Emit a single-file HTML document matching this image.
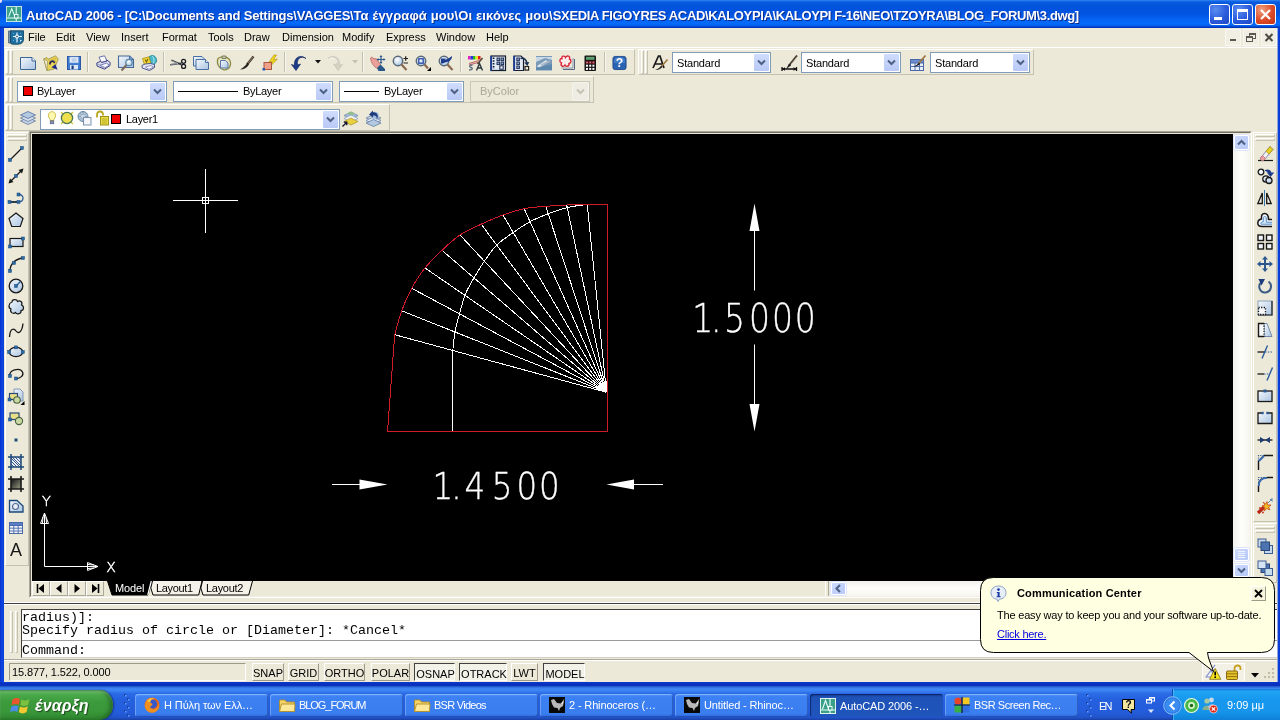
<!DOCTYPE html>
<html lang="el"><head><meta charset="utf-8"><title>AutoCAD 2006</title>
<style>
html,body{margin:0;padding:0;}
body{width:1280px;height:720px;overflow:hidden;background:#ECE9D8;font-family:"Liberation Sans",sans-serif;font-size:11px;position:relative;}
#scr{will-change:transform;position:absolute;left:0;top:0;width:1280px;height:720px;overflow:hidden;background:#ECE9D8;}
#scr div,#scr span.t,#scr svg.i{position:absolute;box-sizing:border-box;}
span.t{white-space:nowrap;display:block;}
svg.i{overflow:visible;}
.tb{background:#ECE9D8;border-top:1px solid #fff;border-left:1px solid #fff;border-bottom:1px solid #C5C2B2;border-right:1px solid #C5C2B2;}
.gv{width:3px;border-left:1px solid #fff;border-top:1px solid #fff;border-right:1px solid #C4C1B0;border-bottom:1px solid #C4C1B0;}
.gh{height:3px;border-left:1px solid #fff;border-top:1px solid #fff;border-right:1px solid #C4C1B0;border-bottom:1px solid #C4C1B0;}
.sep{width:2px;border-left:1px solid #C2BFAE;border-right:1px solid #F8F7F0;}
.cb{background:#fff;border:1px solid #7F9DB9;}
.cbb{background:linear-gradient(#D0DCFC,#B8C9F6);border:1px solid #fff;border-radius:2px;}
.cbd{background:#ECE9D8;border:1px solid #C9C7BA;}
.sbtn{border-top:1px solid #fff;border-left:1px solid #fff;border-bottom:1px solid #9D9A8C;border-right:1px solid #9D9A8C;background:#ECE9D8;}
.sbtnp{border-top:1px solid #404040;border-left:1px solid #404040;border-bottom:1px solid #fff;border-right:1px solid #fff;background:#F3F2E9;}
.tk{border-radius:3px;background:linear-gradient(#5A9CFA 0,#3C81F3 12%,#3A7DEF 85%,#2E6ADF 100%);box-shadow:inset 1px 1px 0 rgba(255,255,255,.25), inset -1px -1px 0 rgba(0,0,40,.25);}
.tka{border-radius:3px;background:linear-gradient(#163F9A 0,#1E52B7 15%,#1F55BC 100%);box-shadow:inset 1px 1px 1px rgba(0,0,40,.5);}
</style></head><body><div id="scr">
<div style="left:0px;top:0px;width:1280px;height:28px;background:linear-gradient(#3A8CF4 0,#1467E6 4%,#0658DE 10%,#0153DD 28%,#0254E0 48%,#045BE8 60%,#0566F5 72%,#066AFA 84%,#0563F0 91%,#0040CC 96%,#0030B0 100%);"></div>
<div style="left:0px;top:0px;width:2px;height:3px;background:#E6DEFC;border-bottom-right-radius:2px;"></div>
<div style="left:0px;top:28px;width:4px;height:658px;background:linear-gradient(90deg,#0A2FD0,#0C48E0 50%,#0A3FD8);"></div>
<div style="left:1277px;top:28px;width:3px;height:658px;background:linear-gradient(90deg,#92A7DA 0,#92A7DA 33%,#0C44DE 34%,#0A35D0 100%);"></div>
<div style="left:0px;top:682px;width:1280px;height:4px;background:linear-gradient(#0A3ACC,#0830C0 50%,#0A34BC);"></div>
<svg class="i" style="left:6px;top:6px;" width="16" height="16" viewBox="0 0 18 18"><rect x="0.5" y="0.5" width="17" height="17" fill="#3AA089" stroke="#D8F0E8"/><path d="M3 12 L6.5 3 L10 12 M11.5 1 V17 M1 13.5 H17" fill="none" stroke="#E8FFF8" stroke-width="1.2"/><rect x="9.5" y="9.5" width="4" height="4" fill="#3AA089" stroke="#fff"/></svg>
<span class="t" style="left:26px;top:8px;font-size:13px;line-height:15px;color:#fff;font-weight:bold;letter-spacing:-0.21px;text-shadow:1px 1px 0 #0A2A8C;">AutoCAD 2006 - [C:\Documents and Settings\VAGGES\<span style="letter-spacing:0.12px">Τα έγγραφά μου\Οι εικόνες μου\</span><span style="letter-spacing:-0.36px">SXEDIA FIGOYRES ACAD\KALOYPIA\KALOYPI F-16\NEO\TZOYRA\BLOG_FORUM\3.dwg]</span></span>
<div style="left:1209px;top:4px;width:21px;height:21px;border:1px solid #fff;border-radius:3px;background:radial-gradient(circle at 30% 25%,#5C8CF0,#2A5BDC 55%,#1F48C4);"></div>
<svg class="i" style="left:1209px;top:4px;" width="21" height="21" viewBox="0 0 21 21"><rect x="5" y="13" width="8" height="3" fill="#fff"/></svg>
<div style="left:1232px;top:4px;width:21px;height:21px;border:1px solid #fff;border-radius:3px;background:radial-gradient(circle at 30% 25%,#5C8CF0,#2A5BDC 55%,#1F48C4);"></div>
<svg class="i" style="left:1232px;top:4px;" width="21" height="21" viewBox="0 0 21 21"><rect x="5.5" y="5.5" width="10" height="10" fill="none" stroke="#fff" stroke-width="1"/><rect x="5" y="5" width="11" height="3" fill="#fff"/></svg>
<div style="left:1255px;top:4px;width:21px;height:21px;border:1px solid #fff;border-radius:3px;background:radial-gradient(circle at 30% 25%,#F0A080,#DC4A26 55%,#C2331A);"></div>
<svg class="i" style="left:1255px;top:4px;" width="21" height="21" viewBox="0 0 21 21"><path d="M6 6 L15 15 M15 6 L6 15" stroke="#fff" stroke-width="2.2" fill="none"/></svg>
<div style="left:4px;top:28px;width:1273px;height:20px;background:#EDEADA;border-bottom:1px solid #fff;"></div>
<svg class="i" style="left:8px;top:30px;" width="17" height="15" viewBox="0 0 17 15"><path d="M0.5 1 H4 V13 H0.5 Z" fill="#7890A8" stroke="#3C5870" stroke-width=".7"/><path d="M2.5 0.8 H15.5 V9 Q15.5 14 10 14.2 H4.5 Q2.5 14.2 2.5 12 Z" fill="#1E6FA0" stroke="#134868" stroke-width=".9"/><path d="M9 2.5 V12.5 M5 6.5 H14" stroke="#DFF4FF" stroke-width="1.2"/><circle cx="9" cy="6.5" r="1.9" fill="#EAF8FF"/><circle cx="9" cy="6.5" r=".8" fill="#10304C"/><path d="M12 10 L14 10 L12 12 Z" fill="#DFF4FF"/><g fill="#5CB0D8"><rect x="5" y="3" width="1" height="1"/><rect x="12" y="3" width="1" height="1"/><rect x="5" y="10" width="1" height="1"/><rect x="6.5" y="8.5" width="1" height="1"/><rect x="11.5" y="8.3" width="1" height="1"/></g></svg>
<span class="t" style="left:28px;top:31px;font-size:11px;line-height:12px;color:#000;">File</span>
<span class="t" style="left:56px;top:31px;font-size:11px;line-height:12px;color:#000;">Edit</span>
<span class="t" style="left:86px;top:31px;font-size:11px;line-height:12px;color:#000;">View</span>
<span class="t" style="left:121px;top:31px;font-size:11px;line-height:12px;color:#000;">Insert</span>
<span class="t" style="left:162px;top:31px;font-size:11px;line-height:12px;color:#000;">Format</span>
<span class="t" style="left:208px;top:31px;font-size:11px;line-height:12px;color:#000;">Tools</span>
<span class="t" style="left:244px;top:31px;font-size:11px;line-height:12px;color:#000;">Draw</span>
<span class="t" style="left:282px;top:31px;font-size:11px;line-height:12px;color:#000;">Dimension</span>
<span class="t" style="left:342px;top:31px;font-size:11px;line-height:12px;color:#000;">Modify</span>
<span class="t" style="left:386px;top:31px;font-size:11px;line-height:12px;color:#000;">Express</span>
<span class="t" style="left:436px;top:31px;font-size:11px;line-height:12px;color:#000;">Window</span>
<span class="t" style="left:486px;top:31px;font-size:11px;line-height:12px;color:#000;">Help</span>
<div style="left:1225px;top:29px;width:16px;height:17px;background:#F1EFE4;border:1px solid #F8F7F0;"></div>
<svg class="i" style="left:1225px;top:29px;" width="16" height="17" viewBox="0 0 16 17"><rect x="5" y="10" width="6" height="2" fill="#5A5A52"/></svg>
<div style="left:1243px;top:29px;width:16px;height:17px;background:#F1EFE4;border:1px solid #F8F7F0;"></div>
<svg class="i" style="left:1243px;top:29px;" width="16" height="17" viewBox="0 0 16 17"><rect x="6.5" y="4.5" width="6" height="5" fill="none" stroke="#5A5A52"/><rect x="6" y="4" width="7" height="2" fill="#5A5A52"/><rect x="3.5" y="7.5" width="6" height="5" fill="#F1EFE4" stroke="#5A5A52"/><rect x="3" y="7" width="7" height="2" fill="#5A5A52"/></svg>
<div style="left:1261px;top:29px;width:16px;height:17px;background:#F1EFE4;border:1px solid #F8F7F0;"></div>
<svg class="i" style="left:1261px;top:29px;" width="16" height="17" viewBox="0 0 16 17"><path d="M4.5 5 L11.5 12 M11.5 5 L4.5 12" stroke="#4A4A42" stroke-width="2" fill="none"/></svg>
<svg class="i" width="0" height="0" style="left:0;top:0"><defs><linearGradient id="pg" x1="0" y1="0" x2="1" y2="1"><stop offset="0" stop-color="#F4F8FC"/><stop offset="1" stop-color="#A9C4E2"/></linearGradient><radialGradient id="lens" cx=".4" cy=".35" r=".7"><stop offset="0" stop-color="#fff"/><stop offset="1" stop-color="#A8C8E4"/></radialGradient></defs></svg>
<div class="tb" style="left:5px;top:49px;width:630px;height:26px;"></div>
<div class="gv" style="left:6px;top:50px;width:3px;height:24px;"></div>
<div class="gv" style="left:10px;top:50px;width:3px;height:24px;"></div>
<svg class="i" style="left:20px;top:55px;" width="16" height="16" viewBox="0 0 16 16"><path d="M0.5 2.5 H12 L15.5 6 V14.5 H0.5 Z" fill="url(#pg)" stroke="#3C6494"/><path d="M12 2.5 V6 H15.5" fill="#F4F8FC" stroke="#3C6494"/></svg>
<svg class="i" style="left:43px;top:55px;" width="16" height="16" viewBox="0 0 16 16"><path d="M0.8 3.8 L4 2.6 L5.2 4.2 L12.5 0.8 L15.3 4 L11.2 14 L4 15.6 Z" fill="#E9D352" stroke="#A09858" stroke-width=".9"/><path d="M0.8 3.8 L4.5 6 L4 15.6 Z" fill="#F4EFD8" stroke="#A09858" stroke-width=".8"/><path d="M4.5 6 L12.5 3 L11.2 14" fill="none" stroke="#C8B440" stroke-width=".7"/><path d="M7 9.5 C6.5 6 10.5 5 11.5 8" fill="none" stroke="#2A2660" stroke-width="1.7"/><path d="M8.5 12.2 L14.5 14.8 L12.5 9.2 Z" fill="#1C2890"/></svg>
<svg class="i" style="left:66px;top:55px;" width="16" height="16" viewBox="0 0 16 16"><rect x="1.5" y="1.5" width="13" height="13" fill="#3F7AD2" stroke="#2C58A8"/><rect x="3.8" y="2" width="8.4" height="5.8" fill="#EAF0FA" stroke="#A8C0E4" stroke-width=".6"/><path d="M5.5 4 H10.5 M5.5 5.8 H10.5" stroke="#88A8D8" stroke-width=".8"/><rect x="4" y="10" width="8" height="4.5" fill="#DCE8F8"/><rect x="5.5" y="10.5" width="2.2" height="3.6" fill="#1C3C80"/></svg>
<div class="sep" style="left:87px;top:52px;width:2px;height:20px;"></div>
<svg class="i" style="left:96px;top:55px;" width="16" height="16" viewBox="0 0 16 16"><path d="M3 2.2 L8.5 0.8 L11 6 L5.5 7.5 Z" fill="#FAFAFE" stroke="#5A64A0" stroke-width=".9"/><path d="M0.8 8 L4.5 6.3 L5.5 7.5 L11 6 L10.5 4.8 L14.2 7.5 L14 10.5 L8.5 14.2 L1 11 Z" fill="#DCDCF0" stroke="#3C4684" stroke-width="1"/><path d="M4 10.2 L10.5 8.2 L13.5 10.2 L8 13.2 Z" fill="#FCFCFF" stroke="#5A64A0" stroke-width=".8"/><path d="M1 9 L8.5 12" stroke="#8088B8" stroke-width=".7"/></svg>
<svg class="i" style="left:118px;top:55px;" width="16" height="16" viewBox="0 0 16 16"><path d="M0.5 1 H11.5 L15.5 4.5 V12.5 H0.5 Z" fill="url(#pg)" stroke="#46689A" stroke-width="1.1"/><path d="M11.5 1 V4.5 H15.5" fill="#7C98D0" stroke="#46689A"/><circle cx="11" cy="7.5" r="3.2" fill="url(#lens)" stroke="#5A88A8" stroke-width="1.3"/><path d="M8.5 10 L3.5 15.5" stroke="#7A6A5C" stroke-width="2"/></svg>
<svg class="i" style="left:141px;top:55px;" width="16" height="16" viewBox="0 0 16 16"><path d="M8 2 C11 -1 16 1 15.5 6 C15 9 12 10 10 9 Z" fill="#48B8C8" stroke="#208098" stroke-width=".8"/><path d="M11 1 C13.5 3 13.5 7 11.5 9" fill="none" stroke="#B8ECF0" stroke-width=".9"/><path d="M1.5 3.5 L8 1.8 L9.8 8.5 L3.5 10 Z" fill="#F2D838" stroke="#A89018" stroke-width=".8"/><path d="M4 4.5 L5.5 7 L7 3.8" fill="none" stroke="#7A6408" stroke-width="1.1"/><path d="M1 10.5 L4 9 L9.5 8.5 L13.5 9.5 L13.5 12.5 L8.5 15.5 L1.2 13 Z" fill="#E8E8F8" stroke="#3C4684" stroke-width=".9"/><path d="M4.5 12 L10 10.5 L12.5 12 L8 14.3 Z" fill="#fff" stroke="#6870A8" stroke-width=".7"/></svg>
<div class="sep" style="left:163px;top:52px;width:2px;height:20px;"></div>
<svg class="i" style="left:170px;top:55px;" width="16" height="16" viewBox="0 0 16 16"><path d="M1.5 5.3 L11.5 9.8 M0.3 9.8 L11.5 8.2" stroke="#30343C" stroke-width="1.5" fill="none"/><path d="M2 5.9 L8 8.5 M1 9.4 L8 8.6" stroke="#D8DCE4" stroke-width=".6"/><circle cx="13.6" cy="6.3" r="2" fill="none" stroke="#181820" stroke-width="1.3"/><circle cx="13.6" cy="11.4" r="2" fill="none" stroke="#181820" stroke-width="1.3"/></svg>
<svg class="i" style="left:193px;top:55px;" width="16" height="16" viewBox="0 0 16 16"><path d="M0.5 1.5 H9 L12 4.5 V11 H0.5 Z" fill="url(#pg)" stroke="#4A6FA5"/><path d="M3 4.5 H12.5 L15.5 7.5 V14.5 H3 Z" fill="url(#pg)" stroke="#4A6FA5"/><path d="M12.5 4.5 V7.5 H15.5" fill="#F0F6FC" stroke="#4A6FA5"/></svg>
<svg class="i" style="left:216px;top:55px;" width="16" height="16" viewBox="0 0 16 16"><path d="M2 3.5 C0 8 3 14 8 14.8 C14 15 16 9 13.5 4.5 C11 1.5 5 1 2 3.5 Z" fill="#E8E4C0" stroke="#8A8A48" stroke-width="1.2"/><path d="M6 1 H10 V3.5 H6 Z" fill="#C8C8B0" stroke="#6A6A48" stroke-width=".8"/><path d="M4.5 5.5 H9.5 L12 8 V13 H4.5 Z" fill="url(#pg)" stroke="#5A78A8"/></svg>
<svg class="i" style="left:239px;top:55px;" width="16" height="16" viewBox="0 0 16 16"><path d="M14.5 1.5 L8 9.5" stroke="#3A3028" stroke-width="2.2"/><path d="M15 1 L9 8" stroke="#A89880" stroke-width=".8"/><path d="M8.5 8 L10 9.5 C8 13 5 14.5 1 14.5 C4 13 6 11 8.5 8 Z" fill="#282420"/></svg>
<svg class="i" style="left:262px;top:55px;" width="16" height="16" viewBox="0 0 16 16"><path d="M12 0 L7 7 L10.5 6.5 L7.5 12 L15.5 4 L11.5 5 L14.5 0 Z" fill="#F4D820" stroke="#B89810" stroke-width=".7"/><rect x="2" y="7.5" width="7.5" height="7" fill="#F0A088" stroke="#A85840"/><rect x="0.5" y="13" width="2.5" height="2.5" fill="#2858B0"/></svg>
<div class="sep" style="left:284px;top:52px;width:2px;height:20px;"></div>
<svg class="i" style="left:291px;top:55px;" width="16" height="16" viewBox="0 0 16 16"><path d="M15 3.5 C10 0.5 5.5 3.5 6.5 10 L9.5 9 L5 15.5 L0.5 9.5 L3.5 10.5 C2.5 3 9 -1.5 15 3.5 Z" fill="#1E3C8C" stroke="#14285E" stroke-width=".7"/></svg>
<svg class="i" style="left:327px;top:55px;" width="16" height="16" viewBox="0 0 16 16"><path d="M1 3.5 C6 0.5 10.5 3.5 9.5 10 L6.5 9 L11 15.5 L15.5 9.5 L12.5 10.5 C13.5 3 7 -1.5 1 3.5 Z" fill="#D6D3C4" stroke="#C4C1B2" stroke-width=".7"/><path d="M2 4 C6 1.5 10 3.5 9.8 8" fill="none" stroke="#fff" stroke-width=".8"/></svg>
<div class="sep" style="left:362px;top:52px;width:2px;height:20px;"></div>
<svg class="i" style="left:369px;top:55px;" width="16" height="16" viewBox="0 0 16 16"><path d="M1.5 3 C3 1.5 4 2.5 5 4 C6.5 3 8 4 9 6 L12 10.5 L8.5 13.5 C5 12 2 8 1.5 3 Z" fill="#E8A098" stroke="#B86860" stroke-width=".8"/><path d="M8 13 L11.5 9.5 L16 14 V16 H9.5 Z" fill="#285888"/><path d="M12 1 V8 M8.5 4.5 H15.5" stroke="#2C5890" stroke-width="1.2"/><path d="M12 0 L13.5 2 H10.5 Z M12 9 L13.5 7 H10.5 Z M7.5 4.5 L9.5 3 V6 Z M16.5 4.5 L14.5 3 V6 Z" fill="#2C5890"/></svg>
<svg class="i" style="left:392px;top:55px;" width="16" height="16" viewBox="0 0 16 16"><circle cx="6" cy="6" r="4.7" fill="url(#lens)" stroke="#5A6878" stroke-width="1.5"/><path d="M9.5 9.5 L14.5 15" stroke="#8A6A50" stroke-width="2.2"/><path d="M11.5 3.5 H16 M13.7 1.3 V5.7 M11.5 8 H16" stroke="#202020" stroke-width="1.2"/></svg>
<svg class="i" style="left:415px;top:55px;" width="16" height="16" viewBox="0 0 16 16"><circle cx="6" cy="6" r="4.7" fill="url(#lens)" stroke="#5A6878" stroke-width="1.5"/><rect x="3.8" y="3.8" width="4.4" height="4.4" fill="none" stroke="#2848A8" stroke-width="1.3"/><path d="M9.5 9.5 L13 13.5" stroke="#8A6A50" stroke-width="2.2"/><path d="M16 12 V16 H12 Z" fill="#000"/></svg>
<svg class="i" style="left:438px;top:55px;" width="16" height="16" viewBox="0 0 16 16"><circle cx="6" cy="6" r="4.7" fill="url(#lens)" stroke="#5A6878" stroke-width="1.5"/><path d="M9.5 9.5 L14.5 15" stroke="#8A6A50" stroke-width="2.2"/><path d="M3 8.5 V3.5 H8 L6.5 5 C9 4 12 3 14 1 C14.5 4 11 7 8.5 7 L4.5 8.5 Z" fill="#1E3C8C"/></svg>
<div class="sep" style="left:460px;top:52px;width:2px;height:20px;"></div>
<svg class="i" style="left:467px;top:55px;" width="16" height="16" viewBox="0 0 16 16"><rect x="1" y="1" width="2.5" height="3.5" fill="#E020C0"/><rect x="3.5" y="1" width="2.5" height="3.5" fill="#3030E0"/><rect x="6" y="1" width="2.5" height="3.5" fill="#20C020"/><rect x="8.5" y="1" width="2.5" height="3.5" fill="#F0E020"/><rect x="11" y="1" width="2.5" height="3.5" fill="#E02020"/><path d="M2 8.5 L12 5.5 M2 10 L11 7.5" stroke="#C06868" stroke-width="1.2"/><path d="M15.5 3 L10.5 9" stroke="#584838" stroke-width="1.6"/><path d="M5.5 10 C2 10 2 12 4 12.5 C6 13 6 15 2 15" fill="none" stroke="#5A6A80" stroke-width="1.3"/><path d="M9.5 15.5 L12.5 8.5 L15.5 15.5 M10.5 13 H14.5" fill="none" stroke="#303840" stroke-width="1.4"/></svg>
<svg class="i" style="left:490px;top:55px;" width="16" height="16" viewBox="0 0 16 16"><rect x="1" y="1" width="14.5" height="14.5" fill="#E4EAF4" stroke="#141C30" stroke-width="1.2"/><path d="M1.2 1 V15.5" stroke="#1C3C94" stroke-width="1.8"/><path d="M3.6 2.5 V14" stroke="#101828" stroke-width="1.7" stroke-dasharray="1.5 1.3"/><rect x="7" y="3" width="2.6" height="2.6" fill="#8CA4CC" stroke="#1C2C50" stroke-width=".9"/><rect x="11" y="3" width="2.6" height="2.6" fill="#8CA4CC" stroke="#1C2C50" stroke-width=".9"/><rect x="7" y="7" width="2.6" height="2.6" fill="#8CA4CC" stroke="#1C2C50" stroke-width=".9"/><rect x="11" y="7" width="2.6" height="2.6" fill="#8CA4CC" stroke="#1C2C50" stroke-width=".9"/><rect x="9.8" y="10.8" width="3.4" height="3.4" fill="#F4F6FA" stroke="#1C2C50" stroke-width="1.1"/></svg>
<svg class="i" style="left:513px;top:55px;" width="16" height="16" viewBox="0 0 16 16"><path d="M1 1 H8 L10.5 3.5 V15.5 H1 Z" fill="#E4EAF4" stroke="#141C30" stroke-width="1.2"/><path d="M1.2 1 V15.5" stroke="#1C3C94" stroke-width="1.8"/><rect x="3.8" y="3" width="2.6" height="2.6" fill="#8CA4CC" stroke="#1C2C50" stroke-width=".9"/><rect x="3.8" y="7" width="2.6" height="2.6" fill="#8CA4CC" stroke="#1C2C50" stroke-width=".9"/><rect x="3.8" y="11" width="2.6" height="2.6" fill="#8CA4CC" stroke="#1C2C50" stroke-width=".9"/><path d="M7.5 3.5 C11.5 2.5 13.5 5 14 8.5" fill="none" stroke="#1C3058" stroke-width="1.6"/><path d="M14.3 11 L11.2 7.6 L16.3 7 Z" fill="#1C3058"/><rect x="12" y="11.5" width="3.6" height="3.6" fill="#F4F2E0" stroke="#202020" stroke-width="1.2"/></svg>
<svg class="i" style="left:536px;top:55px;" width="16" height="16" viewBox="0 0 16 16"><rect x="0" y="1" width="16" height="14.5" fill="#7A9AB8"/><path d="M0 7 L9 3 L16 5 V2 H0 Z" fill="#C8D8E4"/><path d="M1 11 L10 5 L12 7 L3 13 Z" fill="#DCE4EC"/><path d="M0 13 L16 9 V15 H0 Z" fill="#5C88B0"/><path d="M5 10 L14 6" stroke="#A8B8C8" stroke-width="1.5"/></svg>
<svg class="i" style="left:559px;top:55px;" width="16" height="16" viewBox="0 0 16 16"><path d="M4 14.5 H15.5 V4" fill="none" stroke="#586880" stroke-width="1"/><path d="M2.5 13 H14 V3" fill="none" stroke="#8898B0" stroke-width="1"/><rect x="1" y="1.5" width="11" height="10" fill="#F8E8E8"/><path d="M3 3.5 C2 0.5 6 0.5 6.5 2.5 C8 0 11.5 1 10.5 4 C13 5 12 8.5 10 8.5 C10.5 11.5 7 12 6 10 C4.5 12.5 1 11 2.5 8 C0 7 0.5 3.5 3 3.5 Z" fill="#FCECEC" stroke="#D82838" stroke-width="1.4"/></svg>
<svg class="i" style="left:582px;top:55px;" width="16" height="16" viewBox="0 0 16 16"><rect x="2.5" y="0.5" width="11.5" height="15.5" rx="1" fill="#141414"/><rect x="4" y="1.8" width="8.5" height="3" fill="#5CA070"/><rect x="3.2" y="5.8" width="10" height="3.2" fill="#4A1418"/><g fill="#E07080"><rect x="4.2" y="6.6" width="1.7" height="1.7"/><rect x="7.4" y="6.6" width="1.7" height="1.7"/><rect x="10.6" y="6.6" width="1.7" height="1.7"/></g><g fill="#fff"><rect x="4" y="9.7" width="2" height="2"/><rect x="7.2" y="9.7" width="2" height="2"/><rect x="10.4" y="9.7" width="2" height="2"/><rect x="4" y="12.9" width="2" height="2"/><rect x="7.2" y="12.9" width="2" height="2"/><rect x="10.4" y="12.9" width="2" height="2"/></g></svg>
<div class="sep" style="left:604px;top:52px;width:2px;height:20px;"></div>
<svg class="i" style="left:612px;top:56px;" width="15" height="14" viewBox="0 0 16 16"><rect x="0.5" y="0.5" width="15" height="15" rx="2.5" fill="#2C64B4" stroke="#1C4688"/><path d="M1.5 8 C1.5 2 4 1.5 8 1.5 C12 1.5 14.5 2 14.5 8 Z" fill="#4C84D0" opacity=".7"/><text x="8" y="13" font-family="Liberation Sans, sans-serif" font-weight="bold" font-size="14" fill="#fff" text-anchor="middle">?</text></svg>
<svg class="i" style="left:315px;top:60px;" width="6" height="4" viewBox="0 0 6 4"><path d="M0 0 H6 L3 3.5 Z" fill="#101010"/></svg>
<svg class="i" style="left:352px;top:60px;" width="6" height="4" viewBox="0 0 6 4"><path d="M0 0 H6 L3 3.5 Z" fill="#C4C1B2"/></svg>
<div class="tb" style="left:638px;top:49px;width:396px;height:26px;"></div>
<div class="gv" style="left:641px;top:50px;width:3px;height:24px;"></div>
<div class="gv" style="left:645px;top:50px;width:3px;height:24px;"></div>
<svg class="i" style="left:652px;top:55px;" width="16" height="16" viewBox="0 0 16 16"><path d="M1 13 L6.5 1 H8 L12 13 M3 9 H10.5" fill="none" stroke="#181818" stroke-width="1.7"/><path d="M15.5 4.5 L9 12" stroke="#A07840" stroke-width="1.6"/><path d="M9.5 10.5 L10.5 12 C8 14.5 6 15 3 15 C6 14 7.5 12.5 9.5 10.5 Z" fill="#282420"/></svg>
<div class="cb" style="left:672px;top:52px;width:99px;height:21px;"></div>
<div class="cbb" style="left:753px;top:53px;width:17px;height:19px;"></div>
<svg class="i" style="left:753px;top:53px;" width="17" height="19" viewBox="0 0 17 19"><path d="M5 7.5 L8.5 11.0 L12 7.5" fill="none" stroke="#4D6185" stroke-width="2"/></svg>
<span class="t" style="left:677px;top:57px;font-size:11px;line-height:12px;color:#000;letter-spacing:-0.2px;">Standard</span>
<svg class="i" style="left:781px;top:55px;" width="17" height="16" viewBox="0 0 17 16"><path d="M16 0.5 L8 10.5" stroke="#3A3028" stroke-width="2"/><path d="M16.5 1 L10 9" stroke="#B8A890" stroke-width=".7"/><path d="M8 9 L10 10.5 L5 14 Z" fill="#181818"/><path d="M1 12 V16 M15.5 12 V16 M1 14 H15.5" stroke="#101010" stroke-width="1.3"/><path d="M1 14 L4 12.3 V15.7 Z M15.5 14 L12.5 12.3 V15.7 Z" fill="#101010"/></svg>
<div class="cb" style="left:801px;top:52px;width:100px;height:21px;"></div>
<div class="cbb" style="left:883px;top:53px;width:17px;height:19px;"></div>
<svg class="i" style="left:883px;top:53px;" width="17" height="19" viewBox="0 0 17 19"><path d="M5 7.5 L8.5 11.0 L12 7.5" fill="none" stroke="#4D6185" stroke-width="2"/></svg>
<span class="t" style="left:806px;top:57px;font-size:11px;line-height:12px;color:#000;letter-spacing:-0.2px;">Standard</span>
<svg class="i" style="left:910px;top:55px;" width="16" height="16" viewBox="0 0 16 16"><rect x="0.5" y="4.5" width="13" height="11" fill="#E8EEF8" stroke="#4A68A8"/><rect x="0.5" y="4.5" width="13" height="3.5" fill="#6C8CD0" stroke="#4A68A8"/><path d="M0.5 11.5 H13.5 M5 8 V15.5 M9.5 8 V15.5" stroke="#4A68A8" stroke-width=".9"/><path d="M15.5 0.5 L8.5 8.5" stroke="#A07840" stroke-width="1.8"/><path d="M9 7.5 L10 9 C8 11 6 11.5 3.5 11.5 C6 10.5 7.5 9.5 9 7.5 Z" fill="#181818"/></svg>
<div class="cb" style="left:930px;top:52px;width:100px;height:21px;"></div>
<div class="cbb" style="left:1012px;top:53px;width:17px;height:19px;"></div>
<svg class="i" style="left:1012px;top:53px;" width="17" height="19" viewBox="0 0 17 19"><path d="M5 7.5 L8.5 11.0 L12 7.5" fill="none" stroke="#4D6185" stroke-width="2"/></svg>
<span class="t" style="left:935px;top:57px;font-size:11px;line-height:12px;color:#000;letter-spacing:-0.2px;">Standard</span>
<div class="tb" style="left:5px;top:76px;width:589px;height:27px;"></div>
<div class="gv" style="left:6px;top:77px;width:3px;height:25px;"></div>
<div class="gv" style="left:10px;top:77px;width:3px;height:25px;"></div>
<div class="cb" style="left:17px;top:81px;width:150px;height:21px;"></div>
<div class="cbb" style="left:149px;top:82px;width:17px;height:19px;"></div>
<svg class="i" style="left:149px;top:82px;" width="17" height="19" viewBox="0 0 17 19"><path d="M5 7.5 L8.5 11.0 L12 7.5" fill="none" stroke="#4D6185" stroke-width="2"/></svg>
<div style="left:23px;top:86px;width:10px;height:10px;background:#F00000;border:1px solid #000;"></div>
<span class="t" style="left:37px;top:85px;font-size:11px;line-height:12px;color:#000;letter-spacing:-0.3px;">ByLayer</span>
<div class="cb" style="left:173px;top:81px;width:160px;height:21px;"></div>
<div class="cbb" style="left:315px;top:82px;width:17px;height:19px;"></div>
<svg class="i" style="left:315px;top:82px;" width="17" height="19" viewBox="0 0 17 19"><path d="M5 7.5 L8.5 11.0 L12 7.5" fill="none" stroke="#4D6185" stroke-width="2"/></svg>
<div style="left:178px;top:91px;width:60px;height:1px;background:#000;"></div>
<span class="t" style="left:243px;top:85px;font-size:11px;line-height:12px;color:#000;letter-spacing:-0.3px;">ByLayer</span>
<div class="cb" style="left:339px;top:81px;width:125px;height:21px;"></div>
<div class="cbb" style="left:446px;top:82px;width:17px;height:19px;"></div>
<svg class="i" style="left:446px;top:82px;" width="17" height="19" viewBox="0 0 17 19"><path d="M5 7.5 L8.5 11.0 L12 7.5" fill="none" stroke="#4D6185" stroke-width="2"/></svg>
<div style="left:344px;top:91px;width:35px;height:1px;background:#000;"></div>
<span class="t" style="left:384px;top:85px;font-size:11px;line-height:12px;color:#000;letter-spacing:-0.3px;">ByLayer</span>
<div class="cbd" style="left:470px;top:81px;width:120px;height:21px;"></div>
<div style="left:572px;top:82px;width:17px;height:19px;background:#EFEDE3;border:1px solid #F5F4EC;border-radius:2px;"></div>
<svg class="i" style="left:572px;top:82px;" width="17" height="19" viewBox="0 0 17 19"><path d="M5 7.5 L8.5 11.0 L12 7.5" fill="none" stroke="#C4C1B2" stroke-width="2"/></svg>
<span class="t" style="left:480px;top:85px;font-size:11px;line-height:12px;color:#ACA899;">ByColor</span>
<div class="tb" style="left:5px;top:104px;width:385px;height:27px;"></div>
<div class="gv" style="left:6px;top:105px;width:3px;height:25px;"></div>
<div class="gv" style="left:10px;top:105px;width:3px;height:25px;"></div>
<svg class="i" style="left:20px;top:111px;" width="16" height="16" viewBox="0 0 16 16"><path d="M0.5 10 L8 6.5 L15.5 10 L8 13.5 Z" fill="#C8D4E4" stroke="#6078A0" stroke-width=".8"/><path d="M0.5 7 L8 3.5 L15.5 7 L8 10.5 Z" fill="#D8E0EC" stroke="#6078A0" stroke-width=".8"/><path d="M0.5 4 L8 0.5 L15.5 4 L8 7.5 Z" fill="#B4C8E0" stroke="#5070A0" stroke-width=".8"/></svg>
<div class="cb" style="left:40px;top:109px;width:300px;height:21px;"></div>
<div class="cbb" style="left:322px;top:110px;width:17px;height:19px;"></div>
<svg class="i" style="left:322px;top:110px;" width="17" height="19" viewBox="0 0 17 19"><path d="M5 7.5 L8.5 11.0 L12 7.5" fill="none" stroke="#4D6185" stroke-width="2"/></svg>
<svg class="i" style="left:47px;top:111px;" width="10" height="14" viewBox="0 0 10 14"><path d="M5 0.7 C1.5 0.7 0.3 4.5 2.3 7 C3 8 3.2 8.5 3.2 9.5 H6.8 C6.8 8.5 7 8 7.7 7 C9.7 4.5 8.5 0.7 5 0.7 Z" fill="#FCF8B0" stroke="#C8B840" stroke-width=".9"/><rect x="3.2" y="9.8" width="3.6" height="3" fill="#8890B0" stroke="#505878" stroke-width=".6"/></svg>
<svg class="i" style="left:60px;top:111px;" width="14" height="14" viewBox="0 0 14 14"><path d="M1 1 L13 13 M13 1 L1 13" stroke="#D8C840" stroke-width="1.5"/><circle cx="7" cy="7" r="5.6" fill="#F0E050" stroke="#487858" stroke-width="1.3"/></svg>
<svg class="i" style="left:77px;top:111px;" width="15" height="15" viewBox="0 0 15 15"><circle cx="6" cy="5.5" r="5" fill="#B4C8D8" stroke="#6888A0" stroke-width="1"/><path d="M6 1 V10 M1.5 5.5 H10.5 M3 2.5 L9 8.5 M9 2.5 L3 8.5" stroke="#7898B0" stroke-width=".8"/><circle cx="6" cy="5.5" r="1.8" fill="#D0DCE8"/><rect x="6.5" y="6.5" width="7.5" height="7.5" fill="#F4F6FA" stroke="#7088A8" stroke-width=".9"/></svg>
<svg class="i" style="left:95px;top:110px;" width="14" height="16" viewBox="0 0 14 16"><path d="M2 7.5 V4.5 C2 0.5 8 0.5 8 4.5 V5.5" fill="none" stroke="#B8A820" stroke-width="1.8"/><rect x="5.5" y="6.5" width="8" height="8.5" fill="#E8DC48" stroke="#988810" stroke-width=".9"/><path d="M7 9 H12 M7 11 H12 M7 13 H12" stroke="#B0A020" stroke-width=".8"/></svg>
<div style="left:111px;top:114px;width:10px;height:10px;background:#F00000;border:1px solid #000;"></div>
<span class="t" style="left:126px;top:113px;font-size:11px;line-height:12px;color:#000;letter-spacing:-0.3px;">Layer1</span>
<svg class="i" style="left:342px;top:110px;" width="17" height="17" viewBox="0 0 17 17"><path d="M2 5.5 L9 2 L16 5.5 L9 9 Z" fill="#A8C0DC" stroke="#6080A8" stroke-width=".7"/><path d="M5 3.5 L9 1.5 L13 3.5 L9 5.5 Z" fill="#90C088"/><path d="M2 8.5 L9 5 L16 8.5 L9 12 Z" fill="#F0F4F8" stroke="#8098B8" stroke-width=".7"/><path d="M2 11.5 L9 8 L16 11.5 L9 15 Z" fill="#E8D040" stroke="#A89020" stroke-width=".7"/><path d="M0.5 16.5 L4.5 12.5 M1.8 12.2 H4.8 V15.2" fill="none" stroke="#101030" stroke-width="1.3"/></svg>
<svg class="i" style="left:365px;top:110px;" width="17" height="17" viewBox="0 0 17 17"><path d="M1 8 L8.5 4.5 L16 8 L8.5 11.5 Z" fill="#C8D4E4" stroke="#6078A0" stroke-width=".7"/><path d="M1 10.5 L8.5 7 L16 10.5 L8.5 14 Z" fill="#E4EAF2" stroke="#6078A0" stroke-width=".7"/><path d="M1 13 L8.5 9.5 L16 13 L8.5 16.5 Z" fill="#B4C8E0" stroke="#5070A0" stroke-width=".7"/><circle cx="10" cy="5.5" r="3.8" fill="#A0BCE0" opacity=".9"/><path d="M4 4.5 L8 7.5 L8 5.5 C11 5 12.5 7 11.5 10 C14.5 6 12 1.5 8 2.2 L8 0.5 Z" fill="#1E3C7C"/></svg>
<div class="tb" style="left:5px;top:132px;width:24px;height:434px;"></div>
<div class="gh" style="left:7px;top:134px;width:20px;height:3px;"></div>
<div class="gh" style="left:7px;top:138px;width:20px;height:3px;"></div>
<svg class="i" style="left:8px;top:146px;" width="16" height="16" viewBox="0 0 16 16"><path d="M2 14 L14 2" stroke="#181818" stroke-width="1.3"/><rect x="0.5" y="12.5" width="3" height="3" fill="#2C6CA8" stroke="#184878" stroke-width=".5"/><rect x="12.5" y="0.5" width="3" height="3" fill="#2C6CA8" stroke="#184878" stroke-width=".5"/></svg>
<svg class="i" style="left:8px;top:168px;" width="16" height="16" viewBox="0 0 16 16"><path d="M1.5 14.5 L14.5 1.5" stroke="#181818" stroke-width="1.3"/><path d="M0.5 15.5 L2 10.5 L5.5 14 Z M15.5 0.5 L14 5.5 L10.5 2 Z" fill="#181818"/><rect x="6.5" y="6.5" width="3" height="3" fill="#2C6CA8" stroke="#184878" stroke-width=".5"/></svg>
<svg class="i" style="left:8px;top:190px;" width="16" height="16" viewBox="0 0 16 16"><path d="M1.5 12 H10.5 C16.5 12 16.5 4 10.5 4.5" fill="none" stroke="#2C5C98" stroke-width="1.3"/><path d="M1.5 12 H10.5" stroke="#181818" stroke-width="1.3"/><rect x="0.0" y="10.5" width="3" height="3" fill="#2C6CA8" stroke="#184878" stroke-width=".5"/><rect x="9.0" y="10.5" width="3" height="3" fill="#2C6CA8" stroke="#184878" stroke-width=".5"/><rect x="9.0" y="3.0" width="3" height="3" fill="#2C6CA8" stroke="#184878" stroke-width=".5"/></svg>
<svg class="i" style="left:8px;top:212px;" width="16" height="16" viewBox="0 0 16 16"><path d="M8 1 L15 6.5 L12.3 14.5 H3.7 L1 6.5 Z" fill="url(#pg)" stroke="#181818" stroke-width="1.2"/></svg>
<svg class="i" style="left:8px;top:234px;" width="16" height="16" viewBox="0 0 16 16"><rect x="2" y="4.5" width="13" height="8" fill="url(#pg)" stroke="#181818" stroke-width="1.2"/><rect x="0.5" y="11.0" width="3" height="3" fill="#2C6CA8" stroke="#184878" stroke-width=".5"/><rect x="13.5" y="3.0" width="3" height="3" fill="#2C6CA8" stroke="#184878" stroke-width=".5"/></svg>
<svg class="i" style="left:8px;top:256px;" width="16" height="16" viewBox="0 0 16 16"><path d="M2 15 C2 8 7 3 15 2" fill="none" stroke="#181818" stroke-width="1.3"/><rect x="0.5" y="13.5" width="3" height="3" fill="#2C6CA8" stroke="#184878" stroke-width=".5"/><rect x="4.5" y="5.5" width="3" height="3" fill="#2C6CA8" stroke="#184878" stroke-width=".5"/><rect x="13.5" y="0.5" width="3" height="3" fill="#2C6CA8" stroke="#184878" stroke-width=".5"/></svg>
<svg class="i" style="left:8px;top:278px;" width="16" height="16" viewBox="0 0 16 16"><circle cx="8" cy="8" r="6.8" fill="url(#pg)" stroke="#181818" stroke-width="1.3"/><path d="M8 8 L12.5 3.5" stroke="#2C5C98" stroke-width="1.2"/><rect x="6.5" y="6.5" width="3" height="3" fill="#2C6CA8" stroke="#184878" stroke-width=".5"/></svg>
<svg class="i" style="left:8px;top:299px;" width="16" height="16" viewBox="0 0 16 16"><path d="M4 3 C4 0 9 0 9.5 2.5 C12 1 15 3 13.5 6 C16.5 7 16 11.5 13 11.5 C13.5 15 9 16 7.5 13.5 C5 15.5 1.5 13 3 10 C0 9 0.5 4 4 3 Z" fill="url(#pg)" stroke="#181818" stroke-width="1.2"/></svg>
<svg class="i" style="left:8px;top:322px;" width="16" height="16" viewBox="0 0 16 16"><path d="M1.5 15 C2 6 6 6 8 9 C10 12 14 11 15 1.5" fill="none" stroke="#181818" stroke-width="1.3"/></svg>
<svg class="i" style="left:8px;top:344px;" width="16" height="16" viewBox="0 0 16 16"><ellipse cx="8" cy="8" rx="6.8" ry="4.6" fill="url(#pg)" stroke="#181818" stroke-width="1.3"/><rect x="-0.30000000000000004" y="6.5" width="3" height="3" fill="#2C6CA8" stroke="#184878" stroke-width=".5"/><rect x="13.3" y="6.5" width="3" height="3" fill="#2C6CA8" stroke="#184878" stroke-width=".5"/><rect x="6.5" y="1.9" width="3" height="3" fill="#2C6CA8" stroke="#184878" stroke-width=".5"/></svg>
<svg class="i" style="left:8px;top:366px;" width="16" height="16" viewBox="0 0 16 16"><path d="M2 10 C0 4 12 1 14.5 6 C16 9 13 12.5 8 12.5" fill="none" stroke="#181818" stroke-width="1.3"/><rect x="0.5" y="8.5" width="3" height="3" fill="#2C6CA8" stroke="#184878" stroke-width=".5"/><rect x="6.5" y="11.0" width="3" height="3" fill="#2C6CA8" stroke="#184878" stroke-width=".5"/></svg>
<svg class="i" style="left:8px;top:388px;" width="16" height="16" viewBox="0 0 16 16"><path d="M6 1 H12 L15 4 V13 H6 Z" fill="url(#pg)" stroke="#7890B0" stroke-width=".9"/><rect x="1.5" y="5.5" width="8" height="6" fill="#E8E088" stroke="#284878" stroke-width="1.2"/><circle cx="9" cy="12" r="3.3" fill="#C8D8A0" stroke="#486040" stroke-width="1.1"/><path d="M16.5 13 V17 H12.5 Z" fill="#000"/><rect x="0.0" y="10.0" width="3" height="3" fill="#2C6CA8" stroke="#184878" stroke-width=".5"/></svg>
<svg class="i" style="left:8px;top:411px;" width="16" height="16" viewBox="0 0 16 16"><rect x="2" y="2" width="9" height="6.5" fill="#E8E088" stroke="#284878" stroke-width="1.2"/><circle cx="11" cy="10" r="3.6" fill="#C8D8A0" stroke="#486040" stroke-width="1.1"/><rect x="0.5" y="7.0" width="3" height="3" fill="#2C6CA8" stroke="#184878" stroke-width=".5"/></svg>
<svg class="i" style="left:8px;top:432px;" width="16" height="16" viewBox="0 0 16 16"><rect x="6.5" y="6.5" width="3" height="3" fill="#1C4878"/></svg>
<svg class="i" style="left:8px;top:454px;" width="16" height="16" viewBox="0 0 16 16"><rect x="3" y="3" width="10" height="10" fill="#E8EEF8"/><path d="M3 6 L6 3 M3 9 L9 3 M3 12 L12 3 M4 13 L13 4 M7 13 L13 7 M10 13 L13 10" stroke="#284878" stroke-width=".9" transform="scale(-1,1) translate(-16,0)"/><path d="M3 0 V16 M13 0 V16 M0 3 H16 M0 13 H16" stroke="#1C4878" stroke-width="1.5"/></svg>
<svg class="i" style="left:8px;top:476px;" width="16" height="16" viewBox="0 0 16 16"><defs><linearGradient id="gg" x1="0" y1="0" x2="1" y2="1"><stop offset="0" stop-color="#101010"/><stop offset="1" stop-color="#9AA088"/></linearGradient></defs><rect x="3" y="3" width="10" height="10" fill="url(#gg)"/><path d="M3 0 V16 M13 0 V16 M0 3 H16 M0 13 H16" stroke="#181818" stroke-width="1.6"/></svg>
<svg class="i" style="left:8px;top:498px;" width="16" height="16" viewBox="0 0 16 16"><path d="M1.5 2.5 H9 L15 8 V14 H1.5 Z" fill="url(#pg)" stroke="#1C4878" stroke-width="1.3"/><circle cx="7.5" cy="8.5" r="3" fill="#E8EEF4" stroke="#506890" stroke-width="1.2"/></svg>
<svg class="i" style="left:8px;top:520px;" width="16" height="16" viewBox="0 0 16 16"><rect x="1.5" y="2.5" width="13" height="11" fill="#F0F4FA" stroke="#4A68A8"/><rect x="1.5" y="2.5" width="13" height="3" fill="#5C80C8" stroke="#4A68A8"/><path d="M1.5 8.2 H14.5 M1.5 11 H14.5 M5.8 5.5 V13.5 M10.2 5.5 V13.5" stroke="#4A68A8" stroke-width=".9"/></svg>
<svg class="i" style="left:8px;top:541px;" width="16" height="16" viewBox="0 0 16 16"><text x="8" y="14.5" font-family="Liberation Sans, sans-serif" font-size="18" fill="#181818" text-anchor="middle">A</text></svg>
<div class="tb" style="left:1253px;top:132px;width:24px;height:390px;"></div>
<div class="gh" style="left:1255px;top:134px;width:20px;height:3px;"></div>
<div class="gh" style="left:1255px;top:138px;width:20px;height:3px;"></div>
<svg class="i" style="left:1257px;top:146px;" width="16" height="16" viewBox="0 0 16 16"><path d="M1 14.5 H16" stroke="#181818" stroke-width="1.2"/><path d="M13 0.5 L16 3.5 L7 14 C5.5 15.5 3 14 3.5 12 Z" fill="#F0F0F4" stroke="#6870A0" stroke-width=".8"/><path d="M13 0.5 L16 3.5 L12 8.2 L9 5.2 Z" fill="#E8D020" stroke="#A89010" stroke-width=".7"/><path d="M5.5 9.5 L8.5 12.5 L7 14 C5.5 15.5 3 14 3.5 12 Z" fill="#F0A0A0" stroke="#B86868" stroke-width=".7"/></svg>
<svg class="i" style="left:1257px;top:168px;" width="16" height="16" viewBox="0 0 16 16"><circle cx="4" cy="4" r="2.8" fill="#F4F6FA" stroke="#181818" stroke-width="1.3"/><circle cx="9" cy="11" r="3.2" fill="url(#pg)" stroke="#181818" stroke-width="1.3"/><circle cx="12" cy="12.5" r="3" fill="url(#pg)" stroke="#181818" stroke-width="1.3"/><path d="M8 2.5 C12 1 14.5 3.5 13.5 6.5 M13.5 8 L11 5 H16 Z" fill="#1E3C8C" stroke="#1E3C8C" stroke-width="1.2"/></svg>
<svg class="i" style="left:1257px;top:190px;" width="16" height="16" viewBox="0 0 16 16"><path d="M5.3 3 V13.5 H0.8 Z M9.7 3 V13.5 H14.2 Z" fill="#F0EEE4" stroke="#181818" stroke-width="1.3"/><path d="M7.5 0 V16" stroke="#3C78B0" stroke-width="1"/></svg>
<svg class="i" style="left:1257px;top:212px;" width="16" height="16" viewBox="0 0 16 16"><path d="M15 7.5 H11.5 C11.5 3 9.5 1.5 7.5 1.5 C5.5 1.5 4 3 4.5 7 C2 7.5 0.8 9 0.8 11 C0.8 13.5 3 14.5 5 14.5 H15" fill="#F4F8FC" stroke="#181818" stroke-width="1.5"/><path d="M15 10.3 H9.3 V6 C9.3 4 6.3 4 6.3 6 V9.8 C4.3 9.8 3.4 10.8 4 12.2 H15" fill="#D8ECFC" stroke="#5C90C8" stroke-width="1"/></svg>
<svg class="i" style="left:1257px;top:234px;" width="16" height="16" viewBox="0 0 16 16"><rect x="1" y="1" width="5.5" height="5.5" fill="#F4F6FA" stroke="#181818" stroke-width="1.4"/><rect x="9.5" y="1" width="5.5" height="5.5" fill="#F4F6FA" stroke="#181818" stroke-width="1.4"/><rect x="1" y="9.5" width="5.5" height="5.5" fill="#F4F6FA" stroke="#181818" stroke-width="1.4"/><rect x="9.5" y="9.5" width="5.5" height="5.5" fill="#F4F6FA" stroke="#181818" stroke-width="1.4"/></svg>
<svg class="i" style="left:1257px;top:256px;" width="16" height="16" viewBox="0 0 16 16"><path d="M8 1.5 V14.5 M1.5 8 H14.5" stroke="#2C5890" stroke-width="2"/><path d="M8 0 L11 3.5 H5 Z M8 16 L11 12.5 H5 Z M0 8 L3.5 5 V11 Z M16 8 L12.5 5 V11 Z" fill="#2C5890"/></svg>
<svg class="i" style="left:1257px;top:278px;" width="16" height="16" viewBox="0 0 16 16"><path d="M4.5 4 C0 8 3 15 8.5 14.5 C14 14 16 7 11.5 3.5" fill="none" stroke="#3C5C88" stroke-width="2"/><path d="M1.5 1 H8 L4.5 7.5 Z" fill="#1E3C7C"/></svg>
<svg class="i" style="left:1257px;top:300px;" width="16" height="16" viewBox="0 0 16 16"><rect x="1" y="1" width="14" height="14" fill="url(#pg)" stroke="#7890B0" stroke-width=".8"/><path d="M15 1 V15 H1" fill="none" stroke="#181818" stroke-width="1.2"/><rect x="1.5" y="7.5" width="7" height="7" fill="#F8FAFC" stroke="#181818" stroke-width="1.3" stroke-dasharray="1.3 1.3"/></svg>
<svg class="i" style="left:1257px;top:322px;" width="16" height="16" viewBox="0 0 16 16"><path d="M7 1.5 H10 L15 14.5 H7 Z" fill="url(#pg)" stroke="#6880A8" stroke-width=".9"/><path d="M7 1.5 H1.5 V14.5 H7" fill="#F8FAFC" stroke="#181818" stroke-width="1.4"/><path d="M7 1 V15" stroke="#181818" stroke-width="1.2" stroke-dasharray="1.3 1.3"/></svg>
<svg class="i" style="left:1257px;top:344px;" width="16" height="16" viewBox="0 0 16 16"><path d="M0.5 8 H8" stroke="#181818" stroke-width="1.3"/><path d="M8 8 H16" stroke="#2C5C98" stroke-width="1.2" stroke-dasharray="1.5 1.3"/><path d="M10.5 1.5 L5 14.5" stroke="#2C5C98" stroke-width="1.4"/></svg>
<svg class="i" style="left:1257px;top:366px;" width="16" height="16" viewBox="0 0 16 16"><path d="M0.5 8 H7" stroke="#181818" stroke-width="1.3"/><path d="M7 8 H12" stroke="#2C5C98" stroke-width="1.2" stroke-dasharray="1.5 1.3"/><path d="M15.5 1.5 L10 14.5" stroke="#2C5C98" stroke-width="1.4"/></svg>
<svg class="i" style="left:1257px;top:388px;" width="16" height="16" viewBox="0 0 16 16"><rect x="1" y="3" width="14" height="10.5" fill="url(#pg)" stroke="#181818" stroke-width="1.3"/><rect x="6.5" y="1.5" width="3" height="3" fill="#2C5C98"/></svg>
<svg class="i" style="left:1257px;top:410px;" width="16" height="16" viewBox="0 0 16 16"><path d="M5.5 3 H1 V13.5 H15 V3 H10.5" fill="url(#pg)" stroke="#181818" stroke-width="1.3"/><rect x="4.3" y="1.8" width="2.4" height="2.4" fill="#2C5C98"/><rect x="9.3" y="1.8" width="2.4" height="2.4" fill="#2C5C98"/></svg>
<svg class="i" style="left:1257px;top:432px;" width="16" height="16" viewBox="0 0 16 16"><path d="M0.5 8 H15.5" stroke="#181818" stroke-width="1.3"/><path d="M8 8 L3 5 V11 Z M8 8 L13 5 V11 Z" fill="#1C3C70"/></svg>
<svg class="i" style="left:1257px;top:454px;" width="16" height="16" viewBox="0 0 16 16"><path d="M1.5 16 V7 L7 1.5 H16" fill="none" stroke="#181818" stroke-width="1.4"/><path d="M1.5 7 V1.5 H7" fill="none" stroke="#2C5C98" stroke-width="1.1" stroke-dasharray="1.2 1.2"/><path d="M2 7 L7 2" stroke="#3C70B8" stroke-width="1.8"/></svg>
<svg class="i" style="left:1257px;top:476px;" width="16" height="16" viewBox="0 0 16 16"><path d="M1.5 16 V10 C1.5 4 5 1.5 11 1.5 H16" fill="none" stroke="#181818" stroke-width="1.4"/><path d="M1.5 9 V1.5 H9" fill="none" stroke="#2C5C98" stroke-width="1.1" stroke-dasharray="1.2 1.2"/><path d="M1.8 10 C1.8 4.5 5 1.8 10 1.8" fill="none" stroke="#3C70B8" stroke-width="1.8"/></svg>
<svg class="i" style="left:1257px;top:498px;" width="16" height="16" viewBox="0 0 16 16"><path d="M1 15 L7 9" stroke="#B82818" stroke-width="3.2"/><path d="M6 4 L8 7 L5 8 L8 9.5 L7 13 L10 10.5 L13 12 L11.5 9 L14 7 L10.5 7 L10 3.5 L8.5 6 Z" fill="#F0C020" stroke="#C84818" stroke-width=".8"/><path d="M11 5 L15 1 M13 1 L15.5 3.5 M15 0 V3" stroke="#6888B0" stroke-width="1"/><circle cx="3" cy="10" r=".9" fill="#C82818"/><circle cx="6" cy="14.5" r=".9" fill="#C82818"/></svg>
<div class="tb" style="left:1253px;top:523px;width:24px;height:60px;"></div>
<div class="gh" style="left:1255px;top:526px;width:20px;height:3px;"></div>
<div class="gh" style="left:1255px;top:530px;width:20px;height:3px;"></div>
<svg class="i" style="left:1257px;top:538px;" width="16" height="16" viewBox="0 0 16 16"><rect x="1" y="1" width="8" height="8" fill="#C8D8EC" stroke="#3C5C90" stroke-width="1"/><rect x="7.5" y="7.5" width="8" height="8" fill="#C8D8EC" stroke="#3C5C90" stroke-width="1"/><rect x="4" y="4" width="8.5" height="8.5" fill="#4C74B0" stroke="#28487C" stroke-width="1"/></svg>
<svg class="i" style="left:1257px;top:560px;" width="16" height="16" viewBox="0 0 16 16"><rect x="4" y="4" width="8.5" height="8.5" fill="#4C74B0" stroke="#28487C" stroke-width="1"/><rect x="1" y="1" width="8" height="7.5" fill="#D4E4F4" stroke="#3C5C90" stroke-width="1"/><rect x="8" y="8.5" width="7.5" height="7" fill="#C4DCEC" stroke="#3C5C90" stroke-width="1"/></svg>
<div style="left:29px;top:131px;width:1223px;height:467px;border-top:1px solid #ACA899;border-left:1px solid #ACA899;border-right:1px solid #fff;border-bottom:1px solid #fff;background:#ECE9D8;"></div>
<div style="left:30px;top:132px;width:1221px;height:465px;border-top:1px solid #716F64;border-left:1px solid #716F64;border-right:1px solid #F1EFE2;border-bottom:1px solid #F1EFE2;"></div>
<div style="left:31px;top:133px;width:1219px;height:463px;background:#ECE9D8;"></div>
<div style="left:32px;top:134px;width:1201px;height:446.5px;background:#000;"></div>
<svg class="i" style="left:0;top:0" width="1280" height="720" viewBox="0 0 1280 720"><g fill="none" stroke-width="1" shape-rendering="crispEdges"><g stroke="#fff"><line x1="394.7" y1="334.7" x2="606.5" y2="392.3"/><line x1="401.7" y1="310.8" x2="606.5" y2="392.3"/><line x1="411.7" y1="288.3" x2="606.5" y2="392.3"/><line x1="425" y1="268" x2="606.5" y2="392.3"/><line x1="442" y1="250.3" x2="606.5" y2="392.3"/><line x1="460" y1="235" x2="606.5" y2="392.3"/><line x1="481.2" y1="224.2" x2="606.5" y2="392.3"/><line x1="503" y1="215" x2="606.5" y2="392.3"/><line x1="524.2" y1="208.7" x2="606.5" y2="392.3"/><line x1="545.8" y1="206.3" x2="606.5" y2="392.3"/><line x1="566.7" y1="205" x2="606.5" y2="392.3"/><line x1="587.2" y1="204.5" x2="606.5" y2="392.3"/><path d="M452.5 431 L452.5 350.5"/><path d="M452.8 350.5 C453.2 347.4 453.9 337.8 455.0 331.7 C456.1 325.6 457.8 320.3 459.5 314.2 C461.2 308.1 462.6 301.1 465.0 295.0 C467.4 288.9 470.9 283.2 474.2 277.5 C477.5 271.8 480.9 266.2 484.7 260.8 C488.4 255.4 491.9 249.7 496.7 245.0 C501.5 240.3 507.7 236.4 513.3 232.5 C518.8 228.6 524.2 224.8 530.0 221.7 C535.8 218.6 542.0 216.1 548.3 213.7 C554.5 211.3 561.5 209.0 567.5 207.5 C573.5 206.0 581.2 205.3 584.0 204.9"/></g><path d="M603 386 L607 380 L607 393 Z" fill="#fff" stroke="none"/><path d="M387.5 431.5 L394.7 334.7  C395.9 330.7 398.9 318.5 401.7 310.8 C404.5 303.1 407.8 295.4 411.7 288.3 C415.6 281.2 419.9 274.3 425.0 268.0 C430.1 261.7 436.2 255.8 442.0 250.3 C447.8 244.8 453.5 239.3 460.0 235.0 C466.5 230.7 474.0 227.5 481.2 224.2 C488.4 220.9 495.8 217.6 503.0 215.0 C510.2 212.4 517.1 210.1 524.2 208.7 C531.3 207.2 538.7 206.9 545.8 206.3 C552.9 205.7 559.8 205.3 566.7 205.0 C573.6 204.7 583.8 204.6 587.2 204.5 L607.5 204.5 L607.5 431.5 Z" stroke="#D01C2A" stroke-width="1"/></g><g stroke="#fff" stroke-width="1" fill="#fff"><path d="M754.5 230 V290.5 M754.5 344.5 V404"/><path d="M754.5 203.5 L759.5 231 H749.5 Z M754.5 431.5 L759.5 404 H749.5 Z" stroke="none"/><path d="M332 484.5 H360 M634 484.5 H663"/><path d="M387.5 484.5 L359.5 489.5 V479.5 Z M606.5 484.5 L634 489.5 V479.5 Z" stroke="none"/></g><g stroke="#fff" stroke-width="1" fill="none" shape-rendering="crispEdges"><path d="M173 200.5 H238 M205.5 169 V233"/><rect x="202.5" y="197.5" width="6" height="6"/></g><g stroke="#fff" stroke-width="1" fill="none"><path d="M44.5 513 V566.5 H98"/><path d="M44.5 513 L48.5 523.5 H40.5 Z M43 517 L42.5 523 M46 517 L46.5 523"/><path d="M98 566.5 L87.5 562.5 V570.5 Z M94 565 L88 564.5 M94 568 L88 568.5"/></g><g transform="translate(0,332.3) scale(0.86,1)"><text x="804.8 826.8 842.0 870.9 897.7 924.1" y="0" font-family="DejaVu Sans, sans-serif" font-weight="200" font-size="38.4" fill="#fff" stroke="#fff" stroke-width="0.35">1.5000</text></g><g transform="translate(0,498.7) scale(0.86,1)"><text x="503.0 524.6 540.2 571.9 600.7 626.9" y="0" font-family="DejaVu Sans, sans-serif" font-weight="200" font-size="37.8" fill="#fff" stroke="#fff" stroke-width="0.35">1.4500</text></g><g transform="translate(42,505.5) scale(1,1)"><text x="0" y="0" font-family="DejaVu Sans, sans-serif" font-weight="200" font-size="14.4" fill="#fff" stroke="#fff" stroke-width="0.45" textLength="8.8" lengthAdjust="spacing">Y</text></g><g transform="translate(106.2,571.8) scale(1,1)"><text x="0" y="0" font-family="DejaVu Sans, sans-serif" font-weight="200" font-size="14.0" fill="#fff" stroke="#fff" stroke-width="0.45" textLength="8.6" lengthAdjust="spacing">X</text></g></svg>
<div style="left:1233px;top:134px;width:17px;height:446.5px;background:linear-gradient(90deg,#F3F1EC,#FEFEFB 50%,#F6F5F0);"></div>
<div style="left:1234px;top:135px;width:15px;height:15px;background:linear-gradient(135deg,#CBD9FD,#B7C9F7);border:1px solid #fff;border-radius:2px;box-shadow:0 0 0 1px #DDE5FB;"></div>
<svg class="i" style="left:1234px;top:135px;" width="15" height="15" viewBox="0 0 15 15"><path d="M4 9.5 L7.5 6 L11 9.5" fill="none" stroke="#4D6185" stroke-width="2"/></svg>
<div style="left:1234px;top:548px;width:15px;height:13px;background:linear-gradient(135deg,#CBD9FD,#B7C9F7);border:1px solid #fff;border-radius:2px;box-shadow:0 0 0 1px #DDE5FB;"></div>
<svg class="i" style="left:1234px;top:548px;" width="15" height="13" viewBox="0 0 15 13"><path d="M4 3.5 H11 M4 5.5 H11 M4 7.5 H11 M4 9.5 H11" stroke="#EEF2FD" stroke-width="1"/></svg>
<div style="left:1234px;top:564px;width:15px;height:13px;background:linear-gradient(135deg,#CBD9FD,#B7C9F7);border:1px solid #fff;border-radius:2px;box-shadow:0 0 0 1px #DDE5FB;"></div>
<svg class="i" style="left:1234px;top:564px;" width="15" height="13" viewBox="0 0 15 13"><path d="M4 4.5 L7.5 8 L11 4.5" fill="none" stroke="#4D6185" stroke-width="2"/></svg>
<div style="left:32px;top:580.5px;width:1201px;height:15.5px;background:#ECE9D8;"></div>
<div style="left:32px;top:581px;width:18px;height:15px;border-top:1px solid #fff;border-left:1px solid #fff;border-right:1px solid #ACA899;border-bottom:1px solid #ACA899;background:#ECE9D8;"></div>
<div style="left:50px;top:581px;width:18px;height:15px;border-top:1px solid #fff;border-left:1px solid #fff;border-right:1px solid #ACA899;border-bottom:1px solid #ACA899;background:#ECE9D8;"></div>
<div style="left:68px;top:581px;width:18px;height:15px;border-top:1px solid #fff;border-left:1px solid #fff;border-right:1px solid #ACA899;border-bottom:1px solid #ACA899;background:#ECE9D8;"></div>
<div style="left:86px;top:581px;width:18px;height:15px;border-top:1px solid #fff;border-left:1px solid #fff;border-right:1px solid #ACA899;border-bottom:1px solid #ACA899;background:#ECE9D8;"></div>
<svg class="i" style="left:32px;top:581px;" width="18" height="15" viewBox="0 0 18 15"><path d="M5.5 3 V12" stroke="#000" stroke-width="1.6"/><path d="M12 3 V12 L6.5 7.5 Z" fill="#000"/></svg>
<svg class="i" style="left:50px;top:581px;" width="18" height="15" viewBox="0 0 18 15"><path d="M11.5 3 V12 L6 7.5 Z" fill="#000"/></svg>
<svg class="i" style="left:68px;top:581px;" width="18" height="15" viewBox="0 0 18 15"><path d="M6.5 3 V12 L12 7.5 Z" fill="#000"/></svg>
<svg class="i" style="left:86px;top:581px;" width="18" height="15" viewBox="0 0 18 15"><path d="M12.5 3 V12" stroke="#000" stroke-width="1.6"/><path d="M6 3 V12 L11.5 7.5 Z" fill="#000"/></svg>
<svg class="i" style="left:104px;top:580px;" width="160" height="17" viewBox="0 0 160 17"><path d="M3.5 1 L8 15 H44 L48 1 Z" fill="#000" stroke="#000"/><path d="M48.5 1 L46.8 8 L49 15 H94.7 L98 1" fill="#F5F3E9" stroke="#000" stroke-width="1"/><path d="M98.5 1 L96.8 8 L99 15 H144.7 L148.5 1" fill="#F5F3E9" stroke="#000" stroke-width="1"/><path d="M43.8 15 L47.3 1" stroke="#fff" stroke-width="1.2"/></svg>
<span class="t" style="left:115px;top:582px;font-size:11px;line-height:12px;color:#fff;letter-spacing:-0.15px;">Model</span>
<span class="t" style="left:156px;top:582px;font-size:11px;line-height:12px;color:#000;letter-spacing:-0.35px;">Layout1</span>
<span class="t" style="left:206px;top:582px;font-size:11px;line-height:12px;color:#000;letter-spacing:-0.3px;">Layout2</span>
<div style="left:825px;top:581px;width:4px;height:15px;border-left:1px solid #fff;border-right:1px solid #ACA899;background:#ECE9D8;"></div>
<div style="left:830px;top:580.5px;width:403px;height:15.5px;background:linear-gradient(#F3F1EC,#FEFEFB 50%,#F6F5F0);"></div>
<div style="left:831px;top:582px;width:15px;height:13px;background:linear-gradient(135deg,#CBD9FD,#B7C9F7);border:1px solid #fff;border-radius:2px;box-shadow:0 0 0 1px #DDE5FB;"></div>
<svg class="i" style="left:831px;top:582px;" width="15" height="13" viewBox="0 0 15 13"><path d="M9 3 L5.5 6.5 L9 10" fill="none" stroke="#4D6185" stroke-width="2"/></svg>
<div style="left:4px;top:602px;width:1273px;height:1px;background:#fff;"></div>
<div style="left:4px;top:603px;width:1273px;height:1px;background:#404040;"></div>
<div style="left:4px;top:604px;width:1273px;height:1px;background:#fff;"></div>
<div class="gv" style="left:10px;top:611px;width:3px;height:42px;"></div>
<div class="gv" style="left:15px;top:611px;width:3px;height:42px;"></div>
<div style="left:21px;top:609px;width:1256px;height:49px;background:#fff;border-top:1px solid #404040;border-left:1px solid #404040;border-bottom:1px solid #D4D0C8;"></div>
<div style="left:22px;top:640px;width:1255px;height:1px;background:#9A9A9A;"></div>
<span class="t" style="left:22px;top:610px;font-size:13.33px;line-height:15px;color:#000;font-family:'Liberation Mono', monospace;line-height:15px;">radius)]:</span>
<span class="t" style="left:22px;top:623px;font-size:13.33px;line-height:15px;color:#000;font-family:'Liberation Mono', monospace;line-height:15px;">Specify radius of circle or [Diameter]: *Cancel*</span>
<span class="t" style="left:22px;top:643px;font-size:13.33px;line-height:15px;color:#000;font-family:'Liberation Mono', monospace;line-height:15px;">Command:</span>
<div style="left:4px;top:659px;width:1273px;height:1px;background:#ACA899;"></div>
<div style="left:4px;top:660px;width:1273px;height:1px;background:#fff;"></div>
<div style="left:9px;top:663px;width:237px;height:18px;border-top:1px solid #9D9A8C;border-left:1px solid #9D9A8C;border-bottom:1px solid #fff;border-right:1px solid #fff;background:#ECE9D8;"></div>
<span class="t" style="left:12px;top:666px;font-size:11px;line-height:12px;color:#000;letter-spacing:-0.12px;">15.877, 1.522, 0.000</span>
<div class="sbtn" style="left:252px;top:663px;width:32px;height:18px;"></div>
<span class="t" style="left:252px;top:667px;width:32px;text-align:center;font-size:11px;line-height:13px;color:#000;">SNAP</span>
<div class="sbtn" style="left:288px;top:663px;width:31px;height:18px;"></div>
<span class="t" style="left:288px;top:667px;width:31px;text-align:center;font-size:11px;line-height:13px;color:#000;">GRID</span>
<div class="sbtn" style="left:324px;top:663px;width:41px;height:18px;"></div>
<span class="t" style="left:324px;top:667px;width:41px;text-align:center;font-size:11px;line-height:13px;color:#000;">ORTHO</span>
<div class="sbtn" style="left:371px;top:663px;width:39px;height:18px;"></div>
<span class="t" style="left:371px;top:667px;width:39px;text-align:center;font-size:11px;line-height:13px;color:#000;">POLAR</span>
<div class="sbtnp" style="left:414px;top:663px;width:41px;height:18px;"></div>
<span class="t" style="left:415px;top:668px;width:41px;text-align:center;font-size:11px;line-height:13px;color:#000;">OSNAP</span>
<div class="sbtnp" style="left:459px;top:663px;width:48px;height:18px;"></div>
<span class="t" style="left:460px;top:668px;width:48px;text-align:center;font-size:11px;line-height:13px;color:#000;">OTRACK</span>
<div class="sbtn" style="left:511px;top:663px;width:27px;height:18px;"></div>
<span class="t" style="left:511px;top:667px;width:27px;text-align:center;font-size:11px;line-height:13px;color:#000;">LWT</span>
<div class="sbtnp" style="left:543px;top:663px;width:42px;height:18px;"></div>
<span class="t" style="left:544px;top:668px;width:42px;text-align:center;font-size:11px;line-height:13px;color:#000;">MODEL</span>
<div style="left:1202px;top:663px;width:43px;height:18px;border-top:1px solid #fff;border-left:1px solid #fff;border-right:1px solid #fff;background:#F3F1E6;"></div>
<svg class="i" style="left:1205px;top:664px;" width="17" height="16" viewBox="0 0 17 16"><path d="M1 13 L10 1 M3.5 2.5 L9 11 M0.5 13 H6" stroke="#7C8CD0" stroke-width="1.2" fill="none"/><path d="M10.2 4.5 L15.8 15.3 H4.6 Z" fill="#F8E41C" stroke="#6C5C00" stroke-width=".7"/><rect x="9.4" y="7.6" width="1.6" height="3.8" fill="#000"/><rect x="9.4" y="12.4" width="1.6" height="1.6" fill="#000"/></svg>
<svg class="i" style="left:1225px;top:664px;" width="18" height="16" viewBox="0 0 18 16"><path d="M9.5 7 V4.5 C9.5 0.5 15.5 0.5 15.5 4.5 V6" fill="none" stroke="#C8A020" stroke-width="1.8"/><rect x="1.5" y="7" width="11" height="8.5" rx="1" fill="#E8C428" stroke="#7A5C08" stroke-width=".9"/><path d="M2 9.8 H12 M2 12.6 H12" stroke="#7A5C08" stroke-width=".8"/></svg>
<svg class="i" style="left:1251px;top:673px;" width="8" height="5" viewBox="0 0 8 5"><path d="M0 0 H8 L4 4.5 Z" fill="#000"/></svg>
<svg class="i" style="left:1264px;top:668px;" width="12" height="12" viewBox="0 0 12 12"><g fill="#C0BCA8"><rect x="8" y="0" width="2" height="2"/><rect x="4" y="4" width="2" height="2"/><rect x="8" y="4" width="2" height="2"/><rect x="0" y="8" width="2" height="2"/><rect x="4" y="8" width="2" height="2"/><rect x="8" y="8" width="2" height="2"/></g></svg>
<svg class="i" style="left:978px;top:575px;" width="300" height="100" viewBox="0 0 300 100"><path d="M15.5 2.5 H283.5 Q296.5 2.5 296.5 15.5 V64.5 Q296.5 77.5 283.5 77.5 H229.5 L230.5 83 L235.5 96.5 L211 77.5 H15.5 Q2.5 77.5 2.5 64.5 V15.5 Q2.5 2.5 15.5 2.5 Z" fill="#FFFFE1" stroke="#000" stroke-width="1"/></svg>
<svg class="i" style="left:990px;top:585px;" width="17" height="17" viewBox="0 0 17 17"><path d="M8.5 1 C13 1 16 4 16 7.8 C16 11.5 13 14 9.5 14.2 L8 16.5 L7 14.2 C3.5 13.8 1 11.5 1 7.8 C1 4 4 1 8.5 1 Z" fill="#E8EEF8" stroke="#8CA0C4" stroke-width="1"/><circle cx="8.5" cy="4.6" r="1.3" fill="#1838A0"/><path d="M6.8 7 H9.6 V11.2 H10.6 V12.2 H6.6 V11.2 H7.6 V8 H6.8 Z" fill="#1838A0"/></svg>
<span class="t" style="left:1017px;top:587px;font-size:11px;line-height:12px;color:#000;font-weight:bold;letter-spacing:0.18px;">Communication Center</span>
<div style="left:1251px;top:586px;width:15px;height:15px;border-top:1px solid #fff;border-left:1px solid #fff;border-right:1px solid #9D9A8C;border-bottom:1px solid #9D9A8C;background:#F6F5DC;"></div>
<svg class="i" style="left:1251px;top:586px;" width="15" height="15" viewBox="0 0 15 15"><path d="M4 4 L11 11 M11 4 L4 11" stroke="#000" stroke-width="1.8"/></svg>
<span class="t" style="left:997px;top:609px;font-size:11px;line-height:12px;color:#000;letter-spacing:-0.19px;">The easy way to keep you and your software up-to-date.</span>
<span class="t" style="left:997px;top:628px;font-size:11px;line-height:12px;color:#0000E0;letter-spacing:-0.25px;text-decoration:underline;">Click here.</span>
<div style="left:0px;top:686px;width:1280px;height:34px;background:linear-gradient(#1A4FC0 0,#3A80F0 6%,#3F87F5 12%,#2B6BE6 22%,#2560DE 40%,#245DDB 75%,#2154CC 92%,#1941A5 100%);"></div>
<div style="left:0px;top:690px;width:113px;height:30px;border-radius:0 14px 14px 0 / 0 16px 16px 0;background:linear-gradient(#2E8A2E 0,#5CB85C 8%,#48A848 18%,#3C9A3C 40%,#3A983A 70%,#2F862F 100%);box-shadow:inset -3px 0 4px rgba(20,70,20,.55), inset 0 2px 2px rgba(255,255,255,.25), 1px 0 2px rgba(0,0,60,.5);"></div>
<svg class="i" style="left:11px;top:696px;" width="19" height="18" viewBox="0 0 19 18"><path d="M1.5 3.5 C4 1.5 6.5 1.5 9 3 L7.8 8.8 C5.5 7.5 3 7.5 0.5 9.3 Z" fill="#E8582C"/><path d="M10.5 3.2 C13 4.8 15.5 4.8 18.5 3 L17.2 8.8 C14.5 10.5 12 10.5 9.3 9 Z" fill="#7CC040"/><path d="M0.2 10.8 C2.8 9 5.2 9 7.5 10.3 L6.3 16 C4 14.7 1.5 14.7 -1 16.5 Z" fill="#4C8CE8"/><path d="M9 10.5 C11.5 12 14 12 16.8 10.3 L15.6 16 C13 17.8 10.5 17.8 7.8 16.3 Z" fill="#F4C830"/></svg>
<span class="t" style="left:35px;top:697px;font-size:16px;line-height:17px;color:#fff;font-weight:bold;font-style:italic;letter-spacing:0.1px;text-shadow:1px 1px 1px #1C4C1C;">έναρξη</span>
<svg class="i" style="left:124px;top:694px;" width="6" height="24" viewBox="0 0 6 24"><rect x="0" y="0" width="2" height="2" fill="#1846A8"/><rect x="1" y="1" width="1.5" height="1.5" fill="#6CA0F8"/><rect x="3" y="4" width="2" height="2" fill="#1846A8"/><rect x="4" y="5" width="1.5" height="1.5" fill="#6CA0F8"/><rect x="0" y="8" width="2" height="2" fill="#1846A8"/><rect x="1" y="9" width="1.5" height="1.5" fill="#6CA0F8"/><rect x="3" y="12" width="2" height="2" fill="#1846A8"/><rect x="4" y="13" width="1.5" height="1.5" fill="#6CA0F8"/><rect x="0" y="16" width="2" height="2" fill="#1846A8"/><rect x="1" y="17" width="1.5" height="1.5" fill="#6CA0F8"/><rect x="3" y="20" width="2" height="2" fill="#1846A8"/><rect x="4" y="21" width="1.5" height="1.5" fill="#6CA0F8"/></svg>
<div class="tk" style="left:135px;top:694px;width:133px;height:23px;"></div>
<svg class="i" style="left:144px;top:697px;" width="16" height="16" viewBox="0 0 16 16"><circle cx="8" cy="8" r="7.5" fill="#E86818"/><circle cx="8.5" cy="7" r="4.6" fill="#3858C8"/><path d="M1 9 C1 3 6 0 10 1.5 C7 2 5.5 4 6.5 6 C8 6 9 7 8 8.5 C6 9 5.5 11 8 12 C11 13 14 11 15 7 C16 12 12 16 8 15.7 C4 15.5 1 13 1 9 Z" fill="#F09020"/><path d="M3 4 C5 1.5 8 1 10 1.5 C7.5 2.3 6 3.5 6.3 5.5 Z" fill="#F8C848"/></svg>
<span class="t" style="left:164px;top:699px;font-size:11px;line-height:12px;color:#fff;letter-spacing:-0.09px;">Η Πύλη των Ελλ…</span>
<div class="tk" style="left:270px;top:694px;width:133px;height:23px;"></div>
<svg class="i" style="left:279px;top:697px;" width="16" height="16" viewBox="0 0 16 16"><path d="M0.5 3 H6 L7.5 5 H15.5 V14.5 H0.5 Z" fill="#F4D468" stroke="#B08C28" stroke-width=".9"/><path d="M0.5 14.5 L2.5 7 H16 L15.5 14.5 Z" fill="#FCE898" stroke="#B08C28" stroke-width=".9"/></svg>
<span class="t" style="left:299px;top:699px;font-size:11px;line-height:12px;color:#fff;letter-spacing:-1.06px;">BLOG_FORUM</span>
<div class="tk" style="left:405px;top:694px;width:133px;height:23px;"></div>
<svg class="i" style="left:414px;top:697px;" width="16" height="16" viewBox="0 0 16 16"><path d="M0.5 3 H6 L7.5 5 H15.5 V14.5 H0.5 Z" fill="#F4D468" stroke="#B08C28" stroke-width=".9"/><path d="M0.5 14.5 L2.5 7 H16 L15.5 14.5 Z" fill="#FCE898" stroke="#B08C28" stroke-width=".9"/></svg>
<span class="t" style="left:434px;top:699px;font-size:11px;line-height:12px;color:#fff;letter-spacing:-0.73px;">BSR Videos</span>
<div class="tk" style="left:540px;top:694px;width:133px;height:23px;"></div>
<svg class="i" style="left:549px;top:697px;" width="16" height="16" viewBox="0 0 16 16"><rect x="0" y="0" width="16" height="16" fill="#080808"/><path d="M2 3 L5 2 L8 6 L12 6.5 L15 4 L14 9 L11 11 L10 14 L8.5 11 L5 10.5 L3 7 Z" fill="#B8B8B8"/><path d="M12 6.5 L15.5 1.5 L13.5 7 Z" fill="#F0F0F0"/></svg>
<span class="t" style="left:569px;top:699px;font-size:11px;line-height:12px;color:#fff;letter-spacing:-0.14px;">2 - Rhinoceros (…</span>
<div class="tk" style="left:675px;top:694px;width:133px;height:23px;"></div>
<svg class="i" style="left:684px;top:697px;" width="16" height="16" viewBox="0 0 16 16"><rect x="0" y="0" width="16" height="16" fill="#080808"/><path d="M2 3 L5 2 L8 6 L12 6.5 L15 4 L14 9 L11 11 L10 14 L8.5 11 L5 10.5 L3 7 Z" fill="#B8B8B8"/><path d="M12 6.5 L15.5 1.5 L13.5 7 Z" fill="#F0F0F0"/></svg>
<span class="t" style="left:704px;top:699px;font-size:11px;line-height:12px;color:#fff;letter-spacing:-0.14px;">Untitled - Rhinoc…</span>
<div class="tka" style="left:810px;top:694px;width:133px;height:23px;"></div>
<svg class="i" style="left:820px;top:698px;" width="16" height="16" viewBox="0 0 16 16"><rect x="0.5" y="0.5" width="15" height="15" fill="#3AA089" stroke="#E0F4EC"/><path d="M2.5 11 L5.5 2.5 L8.5 11 M10 1 V15 M1 12 H15" fill="none" stroke="#E8FFF8" stroke-width="1.1"/><rect x="8.5" y="8.5" width="3.5" height="3.5" fill="#3AA089" stroke="#fff" stroke-width=".9"/></svg>
<span class="t" style="left:840px;top:700px;font-size:11px;line-height:12px;color:#fff;letter-spacing:-0.11px;">AutoCAD 2006 -…</span>
<div class="tk" style="left:945px;top:694px;width:133px;height:23px;"></div>
<svg class="i" style="left:954px;top:697px;" width="16" height="16" viewBox="0 0 16 16"><circle cx="4" cy="4" r="3.6" fill="#E84428"/><rect x="8.5" y="0.5" width="7" height="7" fill="#F4C820"/><rect x="0.5" y="8.5" width="7" height="7" fill="#38B048"/><rect x="8.5" y="8.5" width="7" height="7" fill="#3070E0"/><path d="M8 0 V16 M0 8 H16" stroke="#101828" stroke-width="1.2"/></svg>
<span class="t" style="left:974px;top:699px;font-size:11px;line-height:12px;color:#fff;letter-spacing:-0.47px;">BSR Screen Rec…</span>
<svg class="i" style="left:1086px;top:694px;" width="6" height="24" viewBox="0 0 6 24"><rect x="0" y="0" width="2" height="2" fill="#1846A8"/><rect x="1" y="1" width="1.5" height="1.5" fill="#6CA0F8"/><rect x="3" y="4" width="2" height="2" fill="#1846A8"/><rect x="4" y="5" width="1.5" height="1.5" fill="#6CA0F8"/><rect x="0" y="8" width="2" height="2" fill="#1846A8"/><rect x="1" y="9" width="1.5" height="1.5" fill="#6CA0F8"/><rect x="3" y="12" width="2" height="2" fill="#1846A8"/><rect x="4" y="13" width="1.5" height="1.5" fill="#6CA0F8"/><rect x="0" y="16" width="2" height="2" fill="#1846A8"/><rect x="1" y="17" width="1.5" height="1.5" fill="#6CA0F8"/><rect x="3" y="20" width="2" height="2" fill="#1846A8"/><rect x="4" y="21" width="1.5" height="1.5" fill="#6CA0F8"/></svg>
<span class="t" style="left:1099px;top:700px;font-size:11px;line-height:12px;color:#fff;letter-spacing:-1.78px;">EN</span>
<svg class="i" style="left:1122px;top:699px;" width="14" height="15" viewBox="0 0 14 15"><path d="M0.5 0.5 H12.5 V10.5 H9 L9.5 14 L5.5 10.5 H0.5 Z" fill="#F4E8A0" stroke="#000" stroke-width="1"/><text x="6.5" y="9.2" font-family="Liberation Sans, sans-serif" font-weight="bold" font-size="10" text-anchor="middle" fill="#000">?</text></svg>
<svg class="i" style="left:1146px;top:697px;" width="10" height="17" viewBox="0 0 10 17"><rect x="3.5" y="0.5" width="5" height="3.5" fill="none" stroke="#fff"/><rect x="3" y="0" width="6" height="1.6" fill="#fff"/><rect x="0.5" y="2.5" width="5" height="3.5" fill="#245DDB" stroke="#fff"/><rect x="0" y="2" width="6" height="1.6" fill="#fff"/><path d="M2 12.5 H8 L5 16 Z" fill="#DCE8FC"/></svg>
<div style="left:1172px;top:689px;width:108px;height:31px;background:linear-gradient(#1478D8 0,#22A4F4 8%,#1CA0F2 16%,#1798EE 35%,#1594EA 75%,#0F80D8 100%);border-left:1px solid #0A50A8;box-shadow:inset 1px 0 0 #48B0F8;"></div>
<svg class="i" style="left:1163px;top:696px;" width="19" height="19" viewBox="0 0 19 19"><circle cx="9.5" cy="9.5" r="8.8" fill="#2C7CE8" stroke="#88C0F8" stroke-width="1"/><circle cx="9.5" cy="9.5" r="7" fill="#3C8CF0"/><path d="M11.5 5.5 L7.5 9.5 L11.5 13.5" fill="none" stroke="#fff" stroke-width="2"/></svg>
<svg class="i" style="left:1184px;top:697px;" width="15" height="17" viewBox="0 0 15 17"><circle cx="7.5" cy="8.5" r="7" fill="#48B848" stroke="#E8F8E0" stroke-width="1.2"/><circle cx="7.5" cy="8.5" r="3.4" fill="#D8F4C8"/><circle cx="7.5" cy="8.5" r="1.7" fill="#186818"/></svg>
<svg class="i" style="left:1201px;top:696px;" width="18" height="18" viewBox="0 0 18 18"><circle cx="6" cy="5" r="2.6" fill="#A8C8A0"/><path d="M1.5 14 C1.5 8 10.5 8 10.5 14 Z" fill="#88B090"/><circle cx="10.5" cy="4" r="2.4" fill="#C8D8E8"/><path d="M7 12 C7 7 15 7 15 12 Z" fill="#B0C4D8"/><circle cx="12.5" cy="13" r="4" fill="#E02818" stroke="#fff" stroke-width=".6"/><path d="M10.8 11.3 L14.2 14.7 M14.2 11.3 L10.8 14.7" stroke="#fff" stroke-width="1.2"/></svg>
<span class="t" style="left:1227px;top:699px;font-size:11px;line-height:12px;color:#fff;">9:09 μμ</span>
</div></body></html>
